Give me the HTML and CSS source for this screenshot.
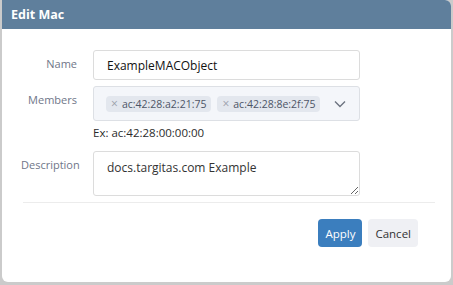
FILE: index.html
```html
<!DOCTYPE html>
<html lang="en">
<head>
  <meta charset="UTF-8" />
  <title>Edit Mac</title>
  <link rel="stylesheet" href="styles.css">
</head>
<body>
  <div class="dialog">
    <div class="dialog-header">Edit Mac</div>
    <div class="dialog-body">
      <div class="form-row">
        <label class="form-label" for="name">Name</label>
        <input id="name" class="text-input" value="ExampleMACObject" />
      </div>
      <div class="form-row">
        <label class="form-label">Members</label>
        <div class="field">
          <div class="tag-select">
            <div class="tags">
              <span class="tag"><span class="tag-x">×</span>ac:42:28:a2:21:75</span>
              <span class="tag"><span class="tag-x">×</span>ac:42:28:8e:2f:75</span>
            </div>
            <svg class="chevron" width="12" height="8" viewBox="0 0 12 8">
              <path d="M1 1.5 L6 6.5 L11 1.5" fill="none" stroke="#6d7480" stroke-width="1.4" />
            </svg>
          </div>
          <div class="hint">Ex: ac:42:28:00:00:00</div>
        </div>
      </div>
      <div class="form-row">
        <label class="form-label" for="desc">Description</label>
        <textarea id="desc" class="text-area">docs.targitas.com Example</textarea>
      </div>
      <hr class="divider">
      <div class="actions">
        <button class="btn btn-primary">Apply</button>
        <button class="btn btn-secondary">Cancel</button>
      </div>
    </div>
  </div>
</body>
</html>
```

FILE: styles.css
```css
body {
  margin: 0;
  background-color: #cbcbcb;
  font-family: "Open Sans", "Noto Sans", sans-serif;
  height: 285px;
  overflow: hidden;
}
.dialog {
  margin: 0 2px;
  width: 449px;
  height: 282px;
  background-color: white;
  border-radius: 0 6px 6px 6px;
  overflow: hidden;
}
.dialog-header {
  height: 29px;
  background-color: #5f7f9c;
  color: white;
  font-size: 12.5px;
  font-weight: bold;
  padding-left: 9px;
  line-height: 30px;
  box-sizing: border-box;
}
.dialog-body {
  padding: 21px 16px 0 19px;
}
.form-row {
  display: grid;
  grid-template-columns: 56px 267px;
  column-gap: 16px;
  margin-bottom: 6px;
}
.form-label {
  text-align: right;
  font-size: 11px;
  color: #6f7689;
  padding-top: 6px;
}
.text-input {
  box-sizing: border-box;
  height: 30px;
  width: 267px;
  border: 1px solid #dcdcdc;
  border-radius: 3px;
  padding: 0 13px;
  font-family: inherit;
  font-size: 12px;
  color: #111;
  outline: none;
}
.tag-select {
  box-sizing: border-box;
  height: 35px;
  border: 1px solid #dde0e5;
  border-radius: 3px;
  background-color: #f4f6fa;
  display: flex;
  align-items: center;
  justify-content: space-between;
  padding: 0 13px 0 12px;
}
.tags {
  display: flex;
  gap: 6px;
}
.tag {
  display: flex;
  align-items: center;
  height: 16px;
  padding: 0 5px 0 5px;
  background-color: #e3e7ee;
  border-radius: 4px;
  font-size: 10.5px;
  color: #4d5566;
}
.tag-x {
  color: #9aa0aa;
  font-size: 12px;
  margin-right: 4px;
}
.hint {
  font-size: 11.5px;
  color: #2b2b2b;
  margin-top: 4px;
  margin-bottom: 5px;
}
.text-area {
  box-sizing: border-box;
  height: 45px;
  width: 267px;
  border: 1px solid #dcdcdc;
  border-radius: 3px;
  padding: 7px 13px;
  font-family: inherit;
  font-size: 12px;
  color: #333;
  outline: none;
}
.divider {
  border: none;
  border-top: 1px solid #ececec;
  margin: 0 0 0 2px;
  width: 412px;
}
.actions {
  display: flex;
  justify-content: flex-end;
  gap: 6px;
  width: 397px;
  margin-top: 16px;
}
.btn {
  height: 28px;
  border: none;
  border-radius: 4px;
  font-family: inherit;
  font-size: 11.5px;
  padding: 0 7px;
  cursor: pointer;
}
.btn-primary {
  background-color: #3b7ebe;
  color: white;
}
.btn-secondary {
  background-color: #eff0f4;
  color: #333;
}
```
